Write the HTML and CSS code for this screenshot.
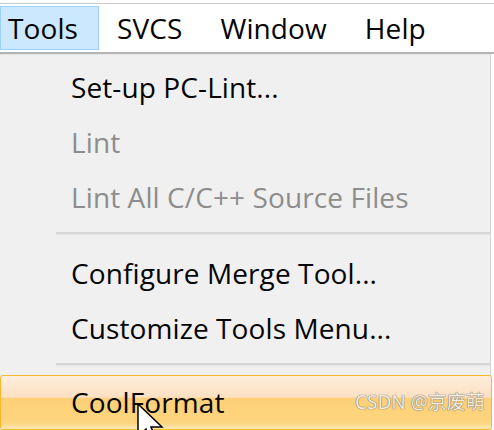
FILE: index.html
```html
<!DOCTYPE html>
<html>
<head>
<meta charset="utf-8">
<link rel="stylesheet" href="styles.css">
</head>
<body>
<div class="screen">
  <nav class="menubar">
    <span class="top-item active">Tools</span>
    <span class="top-item">SVCS</span>
    <span class="top-item">Window</span>
    <span class="top-item">Help</span>
  </nav>
  <div class="dropdown">
    <div class="item">Set-up PC-Lint...</div>
    <div class="item disabled">Lint</div>
    <div class="item disabled">Lint All C/C++ Source Files</div>
    <div class="sep"></div>
    <div class="item">Configure Merge Tool...</div>
    <div class="item">Customize Tools Menu...</div>
    <div class="sep sep2"></div>
    <div class="item hover">CoolFormat
      <span class="watermark">CSDN @京废萌</span>
      <svg class="cursor" width="30" height="40" viewBox="0 0 30 40">
        <path d="M1 1 L1 34 L9 26 L14 38 L19 36 L14 24 L25 24 Z" fill="#fff" stroke="#000" stroke-width="1.5" stroke-linejoin="miter"/>
      </svg>
    </div>
  </div>
</div>
</body>
</html>
```
FILE: styles.css
```css
html, body {
  margin: 0;
  padding: 0;
  background: #ffffff;
}
.screen {
  width: 494px;
  height: 430px;
  overflow: hidden;
  font-family: "Open Sans", "Noto Sans", "Noto Sans CJK SC", sans-serif;
  font-size: 28px;
  letter-spacing: 0.1px;
  color: #050505;
}
.menubar {
  margin-top: 3px;
  border-top: 1px solid #c9c9c9;
  border-bottom: 2px solid #b4b4b4;
  height: 48px;
  display: flex;
  align-items: center;
  background: #fff;
}
.top-item {
  height: 42px;
  line-height: 42px;
  padding: 0 8px 0 7px;
  margin-right: 21px;
  border: 1px solid transparent;
}
.top-item.active {
  background: #cce8ff;
  border-color: #99d1ff;
  padding-right: 20px;
  margin-right: 10px;
}
.dropdown {
  background: #f0f0f0;
  border-right: 1px solid #d4d4d4;
  border-top: 1px solid #e4e4e4;
  width: 490px;
  padding-top: 5px;
  height: 400px;
}
.item {
  position: relative;
  height: 55px;
  line-height: 55px;
  padding-left: 71px;
  white-space: nowrap;
}
.item.disabled {
  color: #8d8d8d;
}
.sep {
  height: 2px;
  margin: 7px 0 11px 56px;
  background: #d7d7d7;
  border-bottom: 1px solid #e6e6e6;
}
.sep2 {
  margin: 7px 0 9px 56px;
}
.item.hover {
  height: 53px;
  line-height: 53px;
  margin-right: -2px;
  border: 1px solid #f8b82c;
  border-radius: 3px;
  padding-left: 70px;
  background: linear-gradient(to bottom, #fdeedd 0%, #fde0c2 40%, #fdd079 42%, #fdd57e 88%, #fde8b6 100%);
}
.watermark {
  position: absolute;
  left: 354px;
  top: 14px;
  font-size: 19px;
  letter-spacing: 0;
  line-height: 24px;
  color: #f2ede2;
  text-shadow: 0 0 1px #6e675a, 0 0 1px #6e675a;
  font-family: "Noto Sans", "Noto Sans CJK SC", sans-serif;
}
.cursor {
  position: absolute;
  left: 136px;
  top: 27px;
}
```
